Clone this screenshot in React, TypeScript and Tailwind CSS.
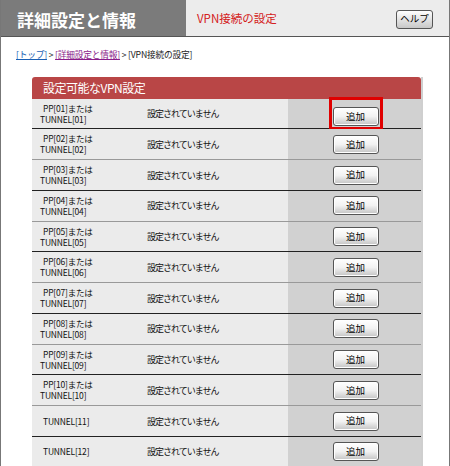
const rows = [
  ["PP[01]または", "TUNNEL[01]"],
  ["PP[02]または", "TUNNEL[02]"],
  ["PP[03]または", "TUNNEL[03]"],
  ["PP[04]または", "TUNNEL[04]"],
  ["PP[05]または", "TUNNEL[05]"],
  ["PP[06]または", "TUNNEL[06]"],
  ["PP[07]または", "TUNNEL[07]"],
  ["PP[08]または", "TUNNEL[08]"],
  ["PP[09]または", "TUNNEL[09]"],
  ["PP[10]または", "TUNNEL[10]"],
  ["TUNNEL[11]"],
  ["TUNNEL[12]"],
];

function AddButton() {
  return (
    <button className="w-[46px] h-[19px] rounded-[3px] border border-[#555] bg-gradient-to-b from-white via-[#f2f2f2] to-[#c4c4c4] text-[9.5px] leading-none text-black shadow-[inset_0_0_0_1px_#fff]">
      追加
    </button>
  );
}

export default function App() {
  return (
    <div className="w-[450px] h-[466px] overflow-hidden bg-white border-l border-r border-[#777] font-['Noto_Sans_CJK_JP',sans-serif]">
      <div className="flex h-[37px] border-b border-[#555]">
        <div className="w-[185px] bg-[#7b7b7b] flex items-center pl-[16px] pt-[3px]">
          <span className="text-white font-bold text-[17px] leading-none">詳細設定と情報</span>
        </div>
        <div className="flex-1 bg-[#ececec] flex items-center justify-between pl-[11px] pr-[16px] pt-[2px]">
          <span className="text-[#d42020] text-[11.5px] leading-none">VPN接続の設定</span>
          <button className="w-[37px] h-[19px] rounded-[3px] border border-[#555] bg-gradient-to-b from-white to-[#c8c8c8] text-[9.5px] leading-none text-black">
            ヘルプ
          </button>
        </div>
      </div>

      <div className="pl-[15px] pt-[14px] text-[8.7px] leading-none text-[#222] tracking-[-0.2px]">
        <span className="text-[#1a5fb4] underline">[トップ]</span>
        <span> &gt; </span>
        <span className="text-[#8a1c8a] underline">[詳細設定と情報]</span>
        <span> &gt; [VPN接続の設定]</span>
      </div>

      <div className="ml-[31px] mt-[17px] w-[389px] shadow-[2px_0_0_#cfcfcf]">
        <div className="h-[22px] bg-[#b94646] rounded-t-[3px] flex items-center pl-[11px]">
          <span className="text-white text-[12px] leading-none tracking-[-0.5px]">設定可能なVPN設定</span>
        </div>
        {rows.map((r, i) => (
          <div
            key={i}
            className={
              "flex h-[30.75px] border-b " +
              (i % 2 === 0 ? "border-[#222]" : "border-[#999]")
            }
          >
            <div className="w-[110px] bg-[#ebebeb] flex flex-col justify-center pl-[8px] text-[8.5px] leading-[11px] text-[#111] tracking-[-0.2px]">
              {r.length === 2 ? (
                <>
                  <span className="pl-[3px]">{r[0]}</span>
                  <span>{r[1]}</span>
                </>
              ) : (
                <span className="pl-[3px]">{r[0]}</span>
              )}
            </div>
            <div className="w-[146px] bg-[#ebebeb] flex items-center text-[9px] leading-none text-[#111] pl-[5px] tracking-[-1px]">
              設定されていません
            </div>
            <div className="flex-1 bg-[#d1d1d1] flex items-center justify-center pl-[2px]">
              {i === 0 ? (
                <div className="border-[3px] border-[#e00000] p-[1px]">
                  <AddButton />
                </div>
              ) : (
                <AddButton />
              )}
            </div>
          </div>
        ))}
      </div>
    </div>
  );
}
